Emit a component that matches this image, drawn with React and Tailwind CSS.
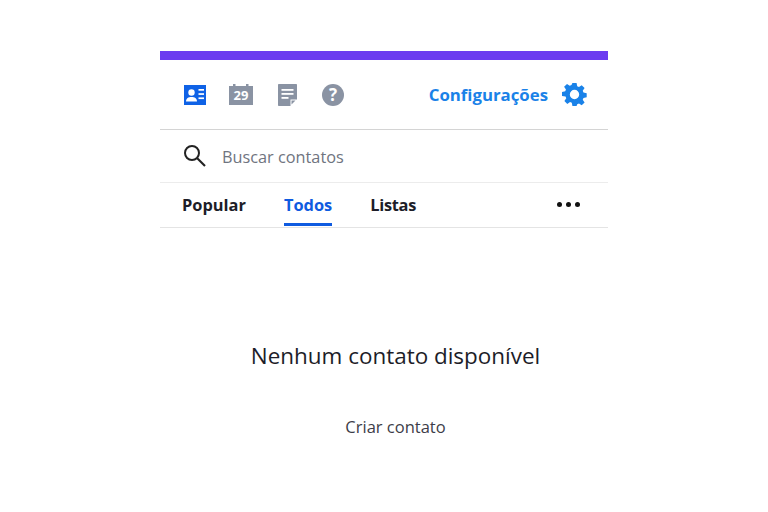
const font = { fontFamily: '"Open Sans", "Noto Sans", sans-serif' }

function ContactIcon() {
  return (
    <svg width="22" height="20" viewBox="0 0 22 20">
      <rect width="22" height="20" fill="#0f62e6" />
      <circle cx="7.500" cy="7.500" r="3.200" fill="#fff" />
      <path d="M2 16.500c0-3.200 2.400-4.600 5.500-4.600s5.500 1.400 5.500 4.600z" fill="#fff" />
      <rect x="14.500" y="4" width="5.500" height="1.700" fill="#fff" />
      <rect x="14.500" y="8.200" width="5.500" height="1.700" fill="#fff" />
      <rect x="14.500" y="12.400" width="5.500" height="1.700" fill="#fff" />
    </svg>
  )
}

function CalendarIcon() {
  return (
    <div className="relative w-[24px] h-[21px]">
      <svg width="24" height="21" viewBox="0 0 24 21" className="absolute inset-0">
        <rect x="0" y="2" width="24" height="19" fill="#8a93a3" />
        <rect x="4" y="0" width="2.500" height="4" fill="#8a93a3" />
        <rect x="17" y="0" width="2.500" height="4" fill="#8a93a3" />
      </svg>
      <span className="absolute inset-x-0 top-[4px] text-center text-[13px] leading-[15px] font-bold text-white">29</span>
    </div>
  )
}

function NoteIcon() {
  return (
    <svg width="19" height="22" viewBox="0 0 19 22">
      <path d="M.8 0h17.400a.8.8 0 0 1 .8.8V22H.8a.8.8 0 0 1-.8-.8V.8A.8.8 0 0 1 .8 0z" fill="#8a93a3" />
      <rect x="3.500" y="5" width="12" height="1.800" fill="#fff" />
      <rect x="3.500" y="9" width="12" height="1.800" fill="#fff" />
      <rect x="3.500" y="13" width="7" height="1.800" fill="#fff" />
      <path d="M12.500 15.500h6.500v6.500h-6.500z" fill="#fff" />
      <path d="M13.500 16.500h4l-4 4z" fill="#8a93a3" />
    </svg>
  )
}

function HelpIcon() {
  return (
    <div className="w-[22px] h-[22px] rounded-full bg-[#8a93a3] flex items-center justify-center text-white text-[17px] leading-none font-bold">
      ?
    </div>
  )
}

function GearIcon() {
  return (
    <svg width="25" height="25" viewBox="0 0 24 24" fill="#1a82e8">
      <path
        fillRule="evenodd"
        d="M10 1h4l.6 3.100 1.700.7 2.600-1.800 2.800 2.800-1.800 2.600.7 1.700 3.100.6v4l-3.100.6-.7 1.700 1.800 2.600-2.800 2.800-2.600-1.800-1.700.7L14 23h-4l-.6-3.100-1.700-.7-2.600 1.800-2.800-2.800 1.800-2.600-.7-1.700L0 13.500v-4l3.100-.6.7-1.700L2 4.600 4.800 1.800l2.600 1.800 1.700-.7z M12 7.500a4.500 4.500 0 1 0 0 9 4.500 4.500 0 0 0 0-9z"
      />
    </svg>
  )
}

function SearchIcon() {
  return (
    <svg width="24" height="24" viewBox="0 0 24 24" fill="none" stroke="#222" strokeWidth="2">
      <circle cx="9" cy="9" r="7" />
      <path d="M14 14l8 8" strokeWidth="2.200" />
    </svg>
  )
}

export default function App() {
  return (
    <div className="w-[768px] h-[512px] bg-white pt-[51px] overflow-hidden" style={font}>
      <div className="w-[448px] ml-[160px]">
        <div className="h-[9px] bg-[#6c3bf0]" />

        {/* Toolbar */}
        <div className="h-[70px] flex items-center pl-[24px] pr-[21px] border-b border-[#d4d4d4]">
          <div className="flex items-center">
            <ContactIcon />
            <div className="ml-[23px]"><CalendarIcon /></div>
            <div className="ml-[25px]"><NoteIcon /></div>
            <div className="ml-[25px]"><HelpIcon /></div>
          </div>
          <span className="ml-auto text-[16.800px] font-bold text-[#1a82e8]">Configurações</span>
          <span className="ml-[14px]"><GearIcon /></span>
        </div>

        {/* Search */}
        <div className="h-[53px] flex items-center pl-[23px] border-b border-[#ececec]">
          <SearchIcon />
          <span className="ml-[15px] pt-[2px] text-[16.300px] text-[#6f7480]">Buscar contatos</span>
        </div>

        {/* Tabs */}
        <div className="h-[45px] flex pl-[22px] pr-[28px] border-b border-[#e4e4e4] text-[16.400px] leading-[26px] font-bold text-[#1d1d28]">
          <div className="pt-[9px]">Popular</div>
          <div className="ml-[38px] pt-[9px] text-[#0f5be0]">
            Todos
            <div className="mt-[5px] h-[3px] bg-[#0f5be0]" />
          </div>
          <div className="ml-[38px] pt-[9px] tracking-[-0.3px]">Listas</div>
          <div className="ml-auto flex items-center gap-[4px] pb-[2px]">
            <span className="w-[5px] h-[5px] rounded-full bg-[#111]" />
            <span className="w-[5px] h-[5px] rounded-full bg-[#111]" />
            <span className="w-[5px] h-[5px] rounded-full bg-[#111]" />
          </div>
        </div>

        {/* Empty state */}
        <div className="flex flex-col items-center pl-[23px] pt-[111px]">
          <h2 className="text-[22.450px] leading-[34px] font-normal text-[#1d1d28]">Nenhum contato disponível</h2>
          <a className="mt-[42px] text-[16.500px] leading-[24px] text-[#3d3d48]">Criar contato</a>
        </div>
      </div>
    </div>
  )
}
